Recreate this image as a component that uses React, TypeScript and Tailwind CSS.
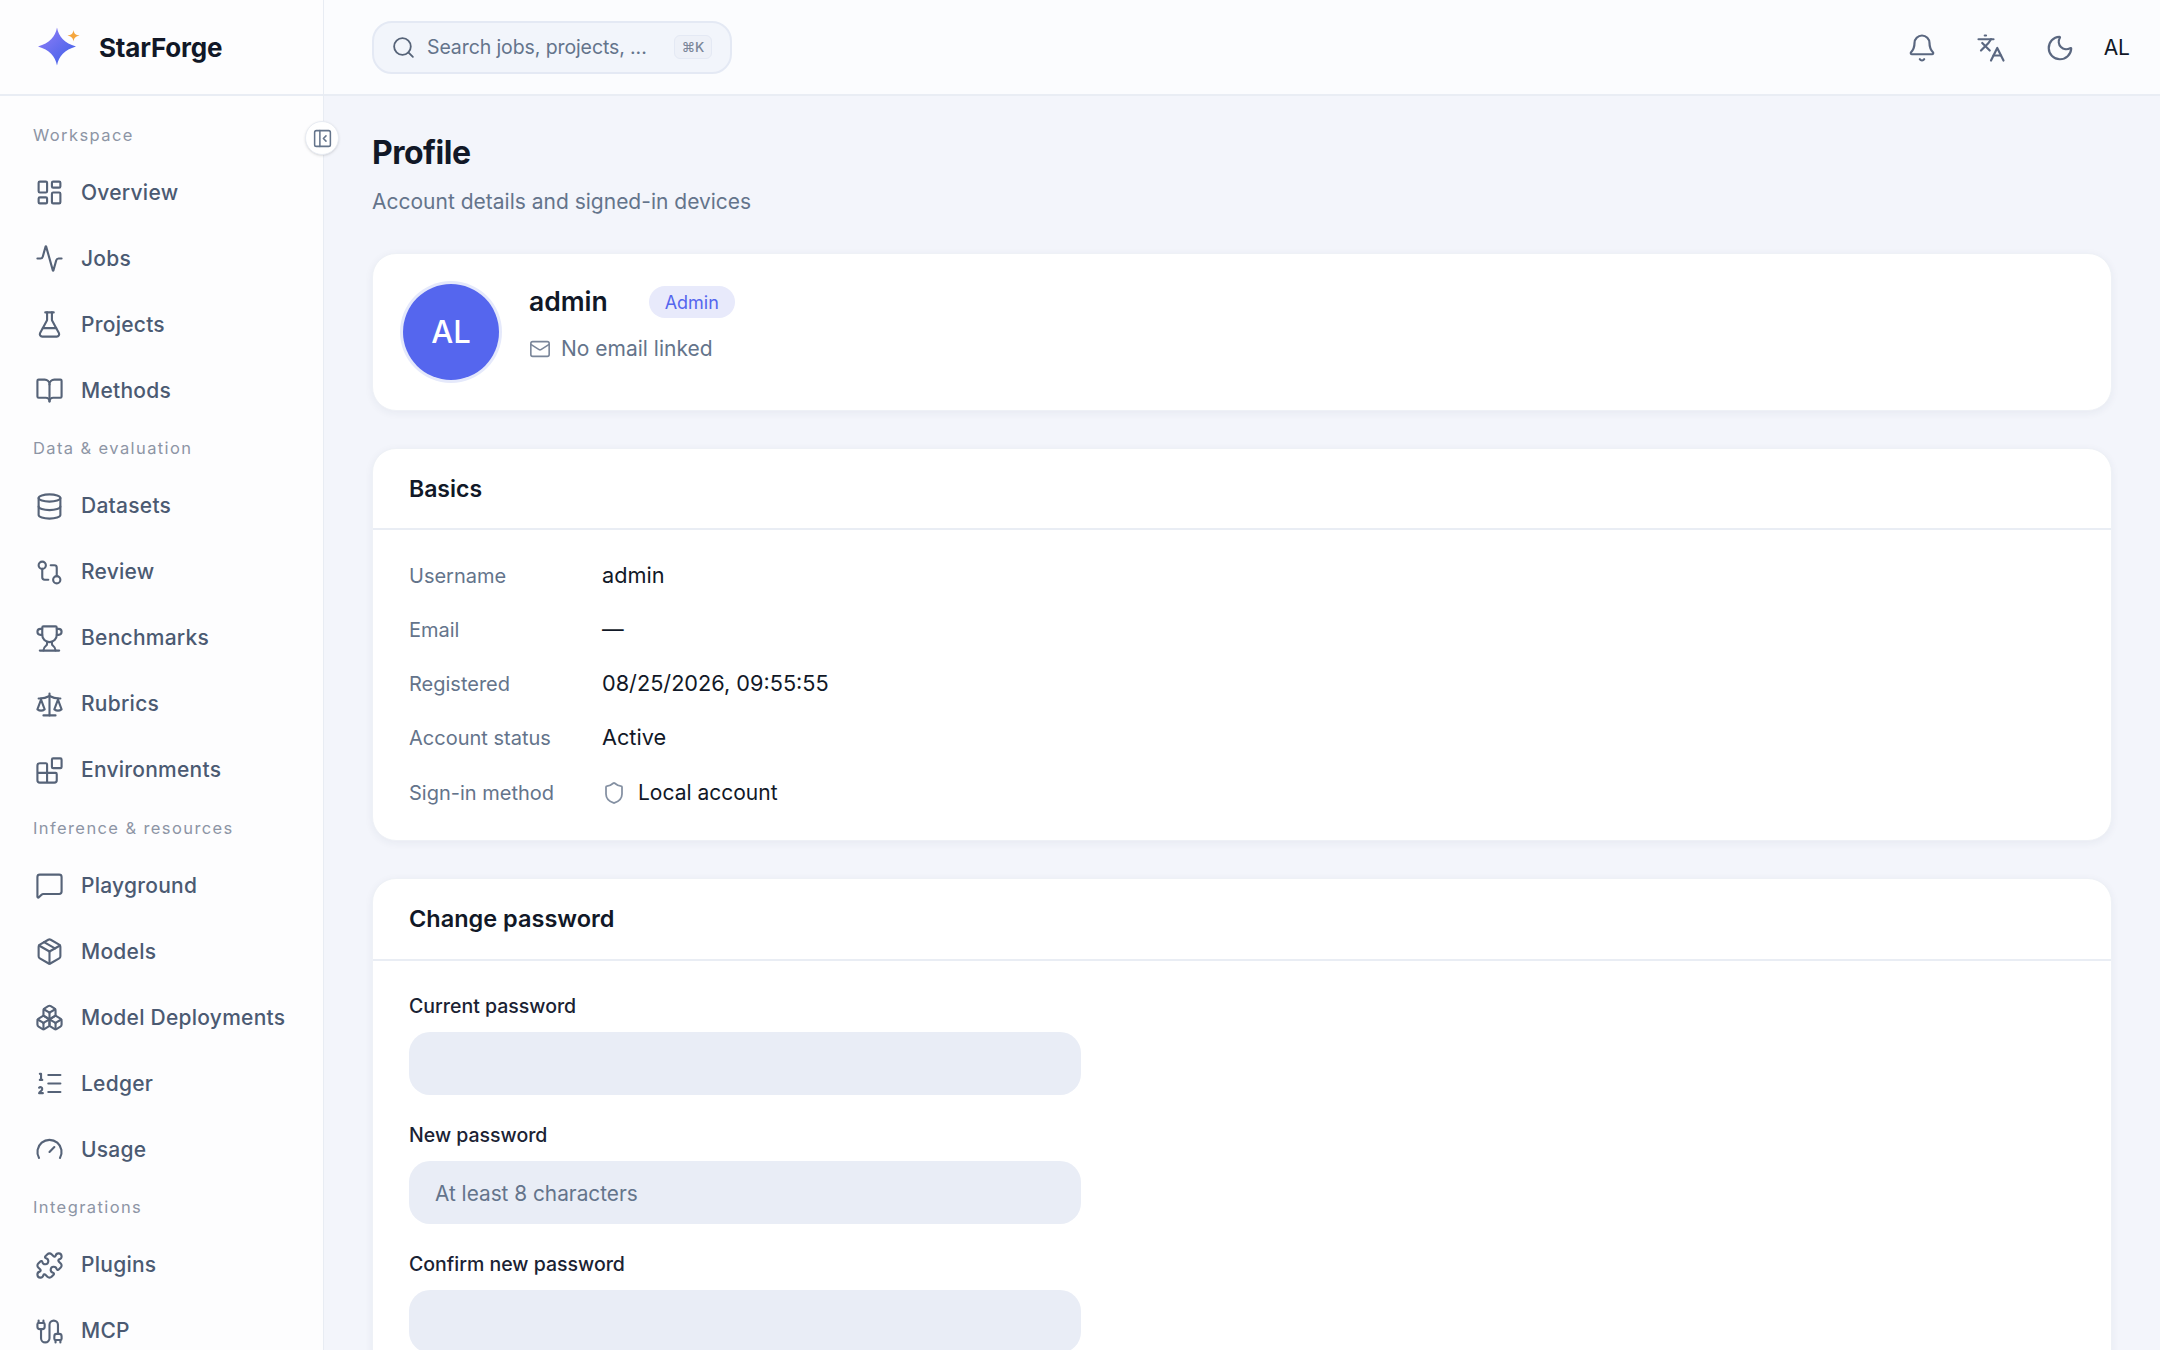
import type { LucideIcon } from 'lucide-react';
import {
  Activity,
  Bell,
  BookOpen,
  Boxes,
  Blocks,
  Cable,
  Database,
  FlaskConical,
  Gauge,
  GitCompare,
  Languages,
  LayoutDashboard,
  ListOrdered,
  Mail,
  MessageSquare,
  Moon,
  Package,
  PanelLeftClose,
  Puzzle,
  Scale,
  Search,
  Shield,
  Trophy,
} from 'lucide-react';

const NAV: { label: string; items: { name: string; icon: LucideIcon }[] }[] = [
  {
    label: 'Workspace',
    items: [
      { name: 'Overview', icon: LayoutDashboard },
      { name: 'Jobs', icon: Activity },
      { name: 'Projects', icon: FlaskConical },
      { name: 'Methods', icon: BookOpen },
    ],
  },
  {
    label: 'Data & evaluation',
    items: [
      { name: 'Datasets', icon: Database },
      { name: 'Review', icon: GitCompare },
      { name: 'Benchmarks', icon: Trophy },
      { name: 'Rubrics', icon: Scale },
      { name: 'Environments', icon: Blocks },
    ],
  },
  {
    label: 'Inference & resources',
    items: [
      { name: 'Playground', icon: MessageSquare },
      { name: 'Models', icon: Package },
      { name: 'Model Deployments', icon: Boxes },
      { name: 'Ledger', icon: ListOrdered },
      { name: 'Usage', icon: Gauge },
    ],
  },
  {
    label: 'Integrations',
    items: [
      { name: 'Plugins', icon: Puzzle },
      { name: 'MCP', icon: Cable },
    ],
  },
];

const BASICS = [
  { label: 'Username', value: 'admin' },
  { label: 'Email', value: '—' },
  { label: 'Registered', value: '08/25/2026, 09:55:55' },
  { label: 'Account status', value: 'Active' },
];

function Logo() {
  return (
    <svg width="44" height="40" viewBox="0 0 44 40" fill="none">
      <defs>
        <linearGradient id="star" x1="4" y1="4" x2="34" y2="38" gradientUnits="userSpaceOnUse">
          <stop stopColor="#8b7cf6" />
          <stop offset="1" stopColor="#3f5fe8" />
        </linearGradient>
      </defs>
      <path d="M19 0.5 C20.8 10 26.5 16 38 19.5 C26.5 23 20.8 29 19 38.5 C17.2 29 11.5 23 0 19.5 C11.5 16 17.2 10 19 0.5 Z" fill="url(#star)" />
      <path d="M35.5 3 C36 6.5 37.5 8 41.5 8.5 C37.5 9.5 36 11 35.5 14.5 C35 11 33.5 9.5 29.5 8.5 C33.5 8 35 6.5 35.5 3 Z" fill="#f5a63d" />
    </svg>
  );
}

function Field({ label, placeholder, type }: { label: string; placeholder?: string; type?: string }) {
  return (
    <label className="block">
      <span className="block h-[30px] text-[19.5px] leading-[30px] font-medium text-[#1a2233]">{label}</span>
      <input
        type={type ?? 'text'}
        placeholder={placeholder}
        className="mt-[11px] block h-[63px] w-[672px] rounded-[21px] bg-[#e9edf6] px-[26px] pt-[2px] text-[20.8px] outline-none placeholder:text-[#64748b]"
      />
    </label>
  );
}

export default function App() {
  return (
    <div className="flex h-[1350px] w-[2160px] overflow-hidden bg-[#f3f5fb] font-['Inter','Liberation_Sans',sans-serif] text-[#111827]">
      {/* Sidebar */}
      <aside className="relative z-10 flex h-full w-[324px] shrink-0 flex-col border-r border-[#e8ecf3] bg-[#fdfdfe]">
        <div className="flex h-[96px] shrink-0 items-center border-b-2 border-[#e9edf4] pl-[38px]">
          <Logo />
          <span className="ml-[17px] mt-[1px] text-[26px] font-bold tracking-[-0.2px] text-[#111827]">StarForge</span>
        </div>

        <button className="absolute left-[305px] top-[121px] flex h-[34px] w-[34px] items-center justify-center rounded-full border border-[#e8ecf3] bg-white shadow-sm">
          <PanelLeftClose size={21} strokeWidth={1.75} className="text-[#64748b]" />
        </button>

        <nav className="flex-1 overflow-hidden px-[18px] pt-[14px]">
          {NAV.map((section) => (
            <div key={section.label}>
              <div className="flex h-[49.5px] items-center pt-[1px] pl-[15px] text-[16.5px] tracking-[1.4px] text-[#8d95a5]">
                {section.label}
              </div>
              {section.items.map((item) => (
                <div key={item.name} className="flex h-[66px] items-center gap-[17px] pl-[17px] text-[21px] font-medium tracking-[0.25px] text-[#4b5a72]">
                  <item.icon size={29} strokeWidth={1.75} className="shrink-0 text-[#566378]" />
                  <span className="whitespace-nowrap">{item.name}</span>
                </div>
              ))}
            </div>
          ))}
        </nav>
      </aside>

      <div className="flex min-w-0 flex-1 flex-col">
        {/* Top bar */}
        <header className="flex h-[96px] shrink-0 items-center justify-between border-b-2 border-[#e9edf4] bg-[#fbfcfe] pl-[48px] pr-[30px]">
          <div className="flex h-[53px] w-[360px] items-center rounded-[20px] border-2 border-[#e4e9f4] bg-[#f2f5fb] pl-[17px] pr-[18px]">
            <Search size={25} strokeWidth={1.75} className="shrink-0 text-[#566378]" />
            <span className="ml-[11px] mt-[1px] flex-1 whitespace-nowrap text-[19.5px] tracking-[-0.1px] text-[#64748b]">Search jobs, projects, ...</span>
            <kbd className="flex h-[24px] w-[38px] items-center justify-center rounded-[6px] border border-[#e4e9f4] bg-[#eef1f8] font-['Inter',sans-serif] text-[13.5px] font-medium text-[#7b8698]">
              ⌘K
            </kbd>
          </div>
          <div className="mt-[2px] flex items-center text-[#5a6780]">
            <Bell size={30} strokeWidth={1.75} />
            <Languages size={30} strokeWidth={1.75} className="ml-[39px]" />
            <Moon size={30} strokeWidth={1.75} className="ml-[39px]" />
            <span className="ml-[29px] text-[21px] text-[#111827]">AL</span>
          </div>
        </header>

        {/* Page */}
        <main className="min-h-0 flex-1 overflow-hidden px-[48px] pt-[36px]">
          <h1 className="text-[32px] leading-[42px] font-bold tracking-[-0.5px] text-[#111827]">Profile</h1>
          <p className="mt-[12px] text-[21px] leading-[32px] text-[#64748b]">Account details and signed-in devices</p>

          <section className="mt-[35px] flex h-[158px] items-center rounded-[24px] border border-[#eef1f6] bg-white pl-[30px] shadow-[0_2px_8px_rgba(40,50,90,0.06)]">
            <div className="flex h-[96px] w-[96px] items-center justify-center rounded-full bg-[#5566ee] text-[31px] font-medium text-white ring-[3px] ring-[#e5e9fb]">
              AL
            </div>
            <div className="ml-[30px] -mt-[17px]">
              <div className="flex items-center">
                <span className="text-[26.5px] font-semibold text-[#111827]">admin</span>
                <span className="ml-[41px] flex h-[32px] w-[86px] items-center justify-center rounded-full bg-[#e8eafb] text-[18px] text-[#5566ee]">
                  Admin
                </span>
              </div>
              <div className="mt-[11px] flex items-center text-[21px] text-[#64748b]">
                <Mail size={22} strokeWidth={1.75} className="text-[#7a869a]" />
                <span className="ml-[10px]">No email linked</span>
              </div>
            </div>
          </section>

          <section className="mt-[37px] rounded-[24px] border border-[#eef1f6] bg-white shadow-[0_2px_8px_rgba(40,50,90,0.06)]">
            <h2 className="flex h-[81px] items-center border-b-2 border-[#e9edf4] pl-[36px] pt-[2px] text-[23px] font-semibold text-[#111827]">Basics</h2>
            <div className="flex flex-col gap-[21px] px-[36px] pt-[29px] pb-[31px]">
              {BASICS.map((row) => (
                <div key={row.label} className="grid h-[33px] grid-cols-[193px_1fr] items-center">
                  <span className="text-[20px] text-[#64748b]">{row.label}</span>
                  <span className="text-[21.7px] text-[#111827]">{row.value}</span>
                </div>
              ))}
              <div className="mt-[1px] grid h-[33px] grid-cols-[193px_1fr] items-center">
                <span className="text-[20px] text-[#64748b]">Sign-in method</span>
                <span className="flex items-center text-[21px] text-[#111827]">
                  <Shield size={24} strokeWidth={1.75} className="text-[#8490a2]" />
                  <span className="ml-[12px]">Local account</span>
                </span>
              </div>
            </div>
          </section>

          <section className="mt-[37px] rounded-[24px] border border-[#eef1f6] bg-white shadow-[0_2px_8px_rgba(40,50,90,0.06)]">
            <h2 className="flex h-[82px] items-center border-b-2 border-[#e9edf4] pl-[36px] text-[23.5px] font-semibold text-[#111827]">Change password</h2>
            <div className="flex flex-col gap-[25px] px-[36px] pt-[30px] pb-[36px]">
              <Field label="Current password" type="password" />
              <Field label="New password" placeholder="At least 8 characters" type="password" />
              <Field label="Confirm new password" type="password" />
            </div>
          </section>
        </main>
      </div>
    </div>
  );
}
